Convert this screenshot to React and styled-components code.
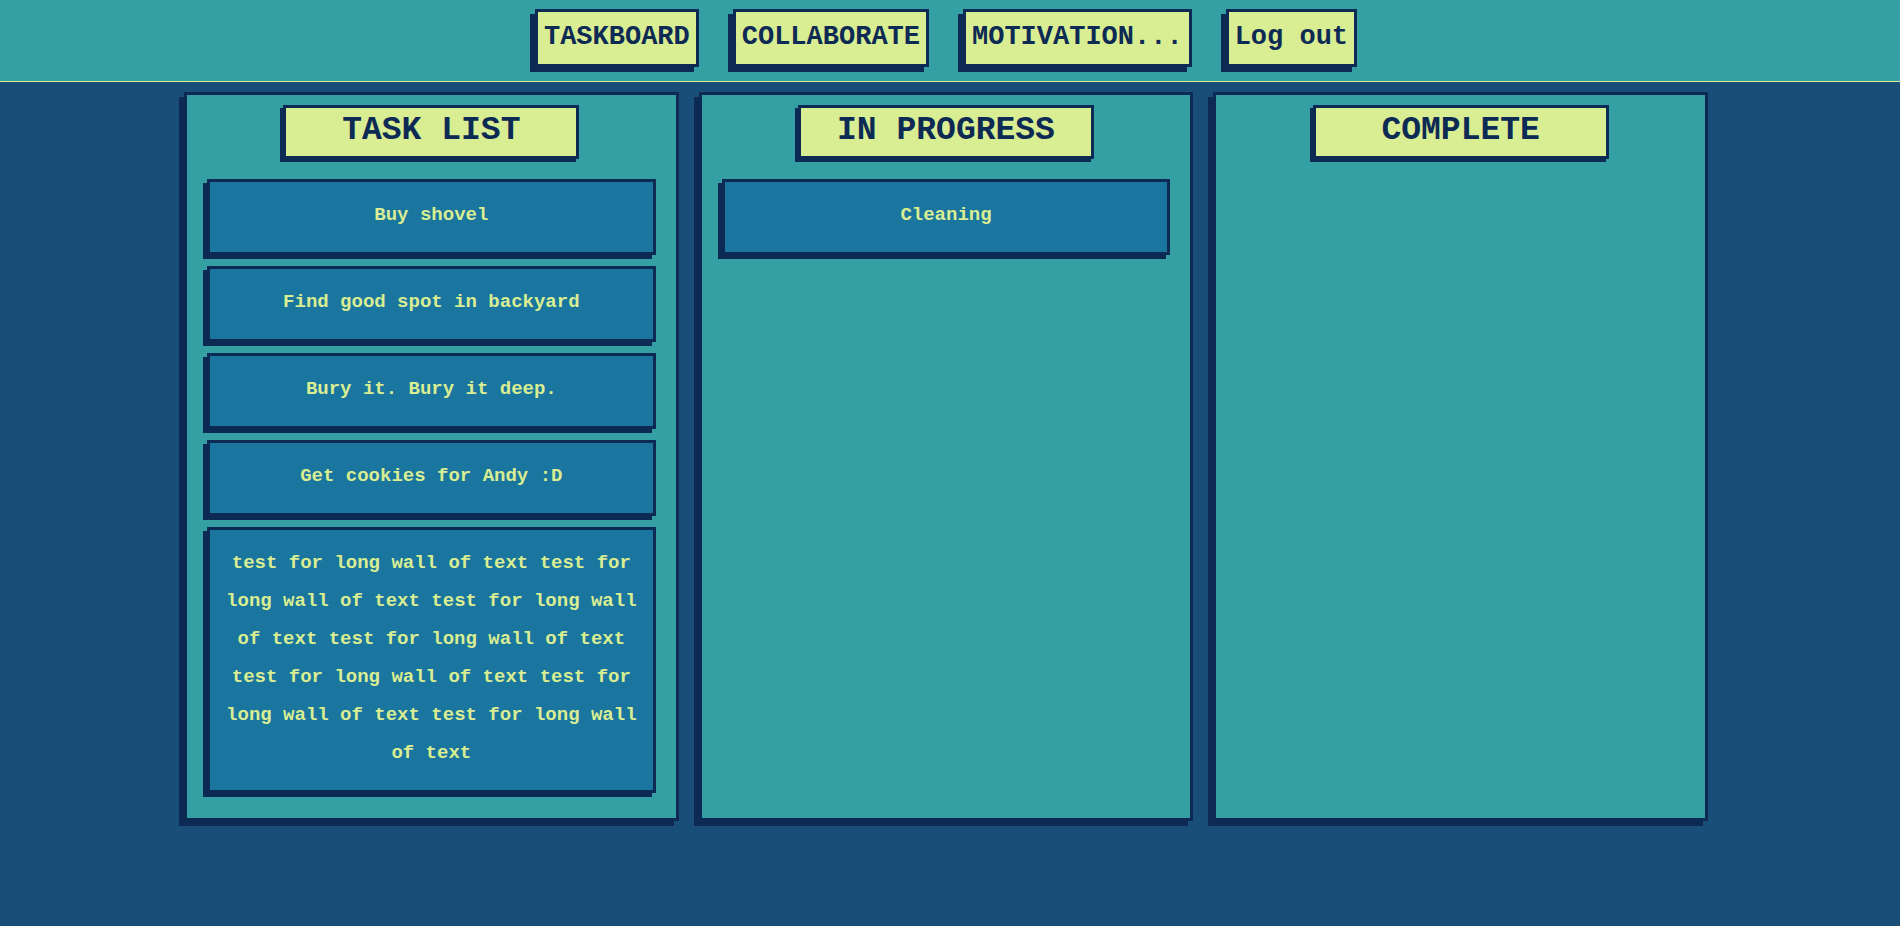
import React from 'react';
import styled, { createGlobalStyle } from 'styled-components';

const navy = '#0d2a54';
const lime = '#d9ed92';
const teal = '#34a0a4';

const GlobalStyle = createGlobalStyle`
  * { box-sizing: border-box; }
  body {
    margin: 0;
    background: #184e77;
    color: ${navy};
    font-family: "Liberation Mono", monospace;
    font-weight: 700;
  }
`;

const Header = styled.header`
  background: ${teal};
  border-bottom: 1px solid ${lime};
  padding: 9px 8px 14px 0;
`;

const Nav = styled.nav`
  display: flex;
  flex-wrap: wrap;
  justify-content: center;
  gap: 34px;
`;

const NavButton = styled.button`
  padding: 9px 6px 11px;
  border: 3px solid ${navy};
  background: ${lime};
  box-shadow: -5px 5px 0 ${navy};
  color: ${navy};
  font: inherit;
  font-size: 27px;
  line-height: 32px;
  cursor: pointer;
`;

const Board = styled.main`
  display: grid;
  grid-template-columns: repeat(3, minmax(0, 1fr));
  gap: 20px;
  padding: 10px 192px 40px 184px;
`;

const Column = styled.section`
  display: flex;
  flex-direction: column;
  align-items: center;
  gap: 20px;
  padding: 10px 20px 25px;
  border: 3px solid ${navy};
  background: ${teal};
  box-shadow: -5px 5px 0 ${navy};
`;

const ColumnTitle = styled.h2`
  width: 66%;
  margin: 0;
  padding: 5px 0 7px;
  border: 3px solid ${navy};
  background: ${lime};
  box-shadow: -3px 3px 0 ${navy};
  font-size: 33px;
  line-height: 36px;
  text-align: center;
  white-space: nowrap;
`;

const TaskList = styled.ul`
  display: flex;
  flex-direction: column;
  gap: 11px;
  width: 100%;
  margin: 0;
  padding: 0;
  list-style: none;
`;

const Task = styled.li`
  padding: 14px 10px 18px;
  border: 3px solid ${navy};
  background: #1a759f;
  box-shadow: -4px 4px 0 ${navy};
  color: ${lime};
  font-size: 19px;
  line-height: 38px;
  text-align: center;
`;

const navItems = ['TASKBOARD', 'COLLABORATE', 'MOTIVATION...', 'Log out'];

const columns = [
  {
    title: 'TASK LIST',
    tasks: [
      'Buy shovel',
      'Find good spot in backyard',
      'Bury it. Bury it deep.',
      'Get cookies for Andy :D',
      Array(7).fill('test for long wall of text').join(' '),
    ],
  },
  { title: 'IN PROGRESS', tasks: ['Cleaning'] },
  { title: 'COMPLETE', tasks: [] },
];

export default function App() {
  return (
    <>
      <GlobalStyle />
      <Header>
        <Nav>
          {navItems.map((label) => (
            <NavButton key={label} type="button">{label}</NavButton>
          ))}
        </Nav>
      </Header>
      <Board>
        {columns.map(({ title, tasks }) => (
          <Column key={title}>
            <ColumnTitle>{title}</ColumnTitle>
            {tasks.length > 0 && (
              <TaskList>
                {tasks.map((task) => <Task key={task}>{task}</Task>)}
              </TaskList>
            )}
          </Column>
        ))}
      </Board>
    </>
  );
}
